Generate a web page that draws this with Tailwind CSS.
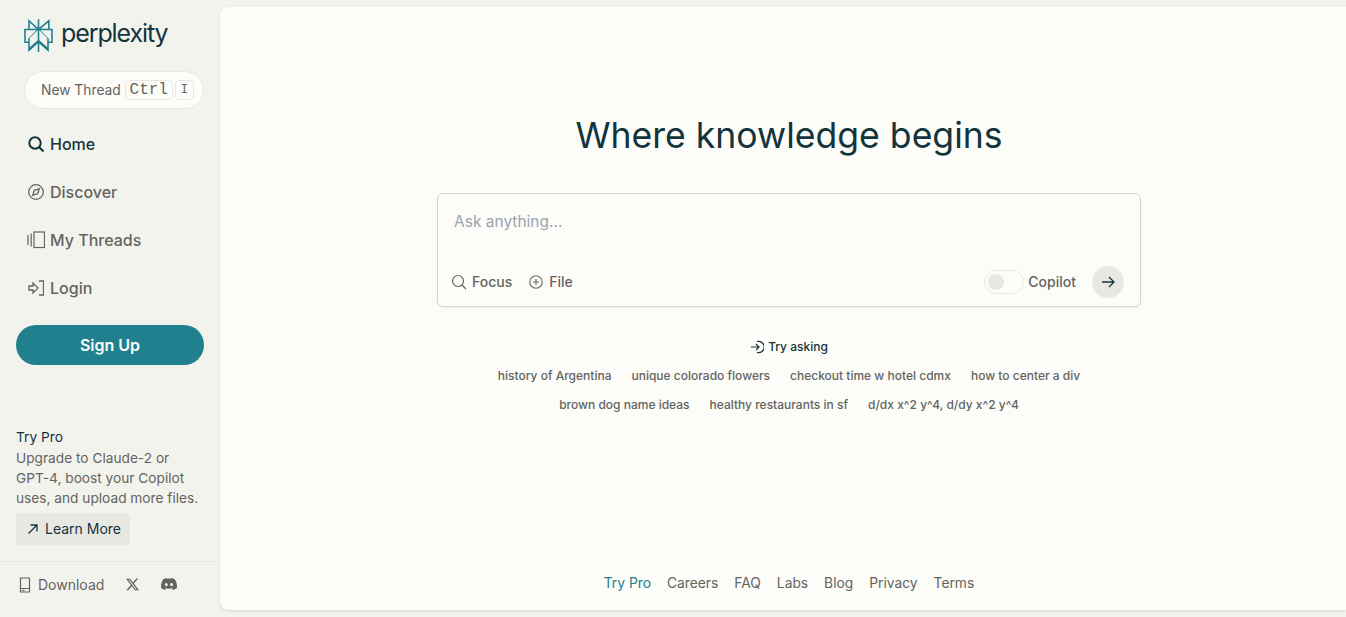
<!DOCTYPE html>
<html lang="en">
  <head>
    <meta charset="UTF-8" />
    <title>Perplexity</title>
    <script src="https://cdn.jsdelivr.net/npm/@tailwindcss/browser@4"></script>
  </head>
  <body class="h-[617px] overflow-hidden bg-[#f3f3ee] font-['Inter',sans-serif] text-[#64645f]">
    <div class="flex h-[617px]">
      <!-- sidebar -->
      <aside class="flex w-[220px] shrink-0 flex-col">
        <div class="flex h-[71px] items-start pl-[22px] pt-[19px]">
          <svg class="h-[33px] w-[33px] text-[#20808d]" viewBox="0 0 24 24" fill="currentColor"><path d="M22.3977 7.0896h-2.3106V.0676l-7.5094 6.3542V.1577h-1.1554v6.1966L4.4904 0v7.0896H1.6023v10.3976h2.8882V24l6.932-6.1002v6.0227h1.1554v-6.0227L19.5 24v-6.5127h2.8977V7.0896zm-3.4657-4.531v4.531h-5.355l5.355-4.531zm-13.2862.0676l4.8691 4.4634H5.6458V2.6262zM2.7576 16.332V8.245h7.8476l-6.1149 6.1147v1.9723H2.7576zm2.8882-2.4516l5.7763-5.7764v7.3948l-5.7763 5.0825v-6.701zm6.9317 1.6124V8.1044l5.7763 5.7764v6.7065l-5.7763-5.0849zm6.9318.8392v-1.9723l-6.115-6.1147h7.8476v8.087h-1.7326z"/></svg>
          <span class="ml-[6px] mt-[-2px] text-[25px] leading-[33px] tracking-[-1.1px] text-[#13343b]">perplexity</span>
        </div>
        <div class="ml-[24px] flex h-[38px] w-[180px] items-center rounded-full border border-[#e8e8e3] bg-[#fcfcf9] pl-[16px]">
          <span class="text-[13.8px]">New Thread</span>
          <kbd class="ml-[4px] flex h-[20px] w-[48px] items-center justify-center rounded border border-[#e8e8e3] font-['Liberation_Mono',monospace] text-base">Ctrl</kbd>
          <kbd class="ml-[2px] flex h-[20px] w-[19px] items-center justify-center rounded border border-[#e8e8e3] font-['Liberation_Mono',monospace] text-xs">I</kbd>
        </div>
        <nav class="mt-[11px] flex flex-col pl-[26px] text-[16px] font-[450]">
          <a class="flex h-[48px] items-center gap-[6px] text-[#13343b]">
            <svg class="h-[18px] w-[18px]" viewBox="0 0 18 18" fill="none" stroke="currentColor" stroke-width="2"><circle cx="9" cy="8" r="5.7"/><path d="M13.2 12.2l4.3 4.3"/></svg>
            Home
          </a>
          <a class="flex h-[48px] items-center gap-[6px]">
            <svg class="h-[18px] w-[18px]" viewBox="0 0 18 18" fill="none" stroke="currentColor" stroke-width="1.3"><circle cx="10" cy="9" r="7.3"/><path d="M13.3 5.7l-1.600 5-5 1.600 1.600-5z"/></svg>
            Discover
          </a>
          <a class="flex h-[48px] items-center gap-[5px]">
            <svg class="h-[18px] w-[19px]" viewBox="0 0 19 18" fill="none" stroke="currentColor" stroke-width="1.2"><path d="M2 4v10M5.200 2.500v13"/><rect x="8" y="1" width="10.500" height="15.500"/></svg>
            My Threads
          </a>
          <a class="flex h-[48px] items-center gap-[6px]">
            <svg class="h-[18px] w-[18px]" viewBox="0 0 18 18" fill="none" stroke="currentColor" stroke-width="1.3"><path d="M13 2h4.500v14H13M3 7h4V4l5 5-5 5v-3H3z"/></svg>
            Login
          </a>
        </nav>
        <button class="ml-[16px] mt-[13px] h-[40px] w-[188px] rounded-full bg-[#20808d] text-[16px] font-semibold text-[#fcfcf9]">Sign Up</button>
        <div class="mt-auto pl-[16px] text-[13.7px] leading-[20px]">
          <div class="mb-[1px] text-[#13343b]">Try Pro</div>
          <p>Upgrade to Claude-2 or<br />GPT-4, boost your Copilot<br />uses, and upload more files.</p>
          <div class="mt-[5px] flex h-[32px] w-[114px] items-center gap-[6px] rounded bg-[#e8e8e3] pl-[11px] text-sm text-[#13343b]">
            <svg class="h-[12px] w-[12px]" viewBox="0 0 12 12" fill="none" stroke="currentColor" stroke-width="1.3"><path d="M1.500 10.500L10 2M3.500 2H10v6.500"/></svg>
            Learn More
          </div>
        </div>
        <div class="mt-[16px] flex h-[56px] items-start border-t border-[#e8e8e3] pl-[19px] pt-[13px] text-sm">
          <svg class="mt-[2px] h-[16px] w-[12px]" viewBox="0 0 12 16" fill="none" stroke="currentColor" stroke-width="1.2"><path d="M1.500 1h9v14h-9zM1.500 11.500h9M3.500 13.300h2"/></svg>
          <span class="ml-[7px] leading-[20px]">Download</span>
          <svg class="ml-[22px] mt-[3px] h-[13px] w-[13px]" viewBox="0 0 24 24" fill="currentColor"><path d="M18.901 1.153h3.68l-8.04 9.19L24 22.846h-7.406l-5.8-7.584-6.638 7.584H.474l8.6-9.83L0 1.154h7.594l5.243 6.932ZM17.61 20.644h2.039L6.486 3.24H4.298Z"/></svg>
          <svg class="ml-[22px] mt-[1px] h-[16px] w-[16px]" viewBox="0 0 24 24" fill="currentColor"><path d="M20.317 4.3698a19.7913 19.7913 0 00-4.8851-1.5152.0741.0741 0 00-.0785.0371c-.211.3753-.4447.8648-.6083 1.2495-1.8447-.2762-3.68-.2762-5.4868 0-.1636-.3933-.4058-.8742-.6177-1.2495a.077.077 0 00-.0785-.037 19.7363 19.7363 0 00-4.8852 1.515.0699.0699 0 00-.0321.0277C.5334 9.0458-.319 13.5799.0992 18.0578a.0824.0824 0 00.0312.0561c2.0528 1.5076 4.0413 2.4228 5.9929 3.0294a.0777.0777 0 00.0842-.0276c.4616-.6304.8731-1.2952 1.226-1.9942a.076.076 0 00-.0416-.1057c-.6528-.2476-1.2743-.5495-1.8722-.8923a.077.077 0 01-.0076-.1277c.1258-.0943.2517-.1923.3718-.2914a.0743.0743 0 01.0776-.0105c3.9278 1.7933 8.18 1.7933 12.0614 0a.0739.0739 0 01.0785.0095c.1202.099.246.1981.3728.2924a.077.077 0 01-.0066.1276 12.2986 12.2986 0 01-1.873.8914.0766.0766 0 00-.0407.1067c.3604.698.7719 1.3628 1.225 1.9932a.076.076 0 00.0842.0286c1.961-.6067 3.9495-1.5219 6.0023-3.0294a.077.077 0 00.0313-.0552c.5004-5.177-.8382-9.6739-3.5485-13.6604a.061.061 0 00-.0312-.0286zM8.02 15.3312c-1.1825 0-2.1569-1.0857-2.1569-2.419 0-1.3332.9555-2.4189 2.157-2.4189 1.2108 0 2.1757 1.0952 2.1568 2.419 0 1.3332-.9555 2.4189-2.1569 2.4189zm7.9748 0c-1.1825 0-2.1569-1.0857-2.1569-2.419 0-1.3332.9554-2.4189 2.1569-2.4189 1.2108 0 2.1757 1.0952 2.1568 2.419 0 1.3332-.946 2.4189-2.1568 2.4189z"/></svg>
        </div>
      </aside>

      <!-- main panel -->
      <main class="my-[7px] flex flex-1 flex-col items-center rounded-l-lg bg-[#fcfcf9] pl-[12px] shadow-sm">
        <h1 class="mt-[105px] text-[35.6px] leading-[48px] text-[#13343b]">Where knowledge begins</h1>
        <div class="mt-[33px] h-[114px] w-[704px] rounded-md border border-[#d5d5d0] shadow-xs">
          <div class="pl-[16px] pt-[16px] text-[15.5px] leading-[24px] text-[#9ca3af]">Ask anything...</div>
          <div class="mt-[28px] flex h-[40px] items-center pl-[13px] pr-[16px] text-sm font-[450]">
            <svg class="h-[16px] w-[16px]" viewBox="0 0 16 16" fill="none" stroke="currentColor" stroke-width="1.200"><circle cx="7" cy="7" r="5.500"/><path d="M11 11l4 4"/></svg>
            <span class="ml-[5px]">Focus</span>
            <svg class="ml-[17px] h-[14px] w-[14px]" viewBox="0 0 14 14" fill="none" stroke="currentColor" stroke-width="1.100"><circle cx="7" cy="7" r="6.300"/><path d="M7 4v6M4 7h6"/></svg>
            <span class="ml-[6px]">File</span>
            <div class="ml-auto flex h-[24px] w-[40px] items-center rounded-full border border-[#e8e8e3] pl-[3px]">
              <div class="h-[16px] w-[16px] rounded-full bg-[#e8e8e3]"></div>
            </div>
            <span class="ml-[4px]">Copilot</span>
            <div class="ml-[16px] flex h-[32px] w-[32px] items-center justify-center rounded-full bg-[#e8e8e3] text-[#13343b]">
              <svg class="h-[14px] w-[14px]" viewBox="0 0 14 14" fill="none" stroke="currentColor" stroke-width="1.300"><path d="M1 7h12M8 2l5 5-5 5"/></svg>
            </div>
          </div>
        </div>
        <div class="mt-[32px] flex h-[16px] items-center gap-[4px] text-xs font-[450] text-[#13343b]">
          <svg class="h-[14px] w-[14px]" viewBox="0 0 14 14" fill="none" stroke="currentColor" stroke-width="1.200"><path d="M1 7h8M6 4l3 3-3 3M7 1.500a5.700 5.700 0 1 1 0 11"/></svg>
          Try asking
        </div>
        <div class="mt-[6px] flex h-[29px] items-center gap-[20px] text-xs font-[450]">
          <span>history of Argentina</span><span>unique colorado flowers</span><span>checkout time w hotel cdmx</span><span>how to center a div</span>
        </div>
        <div class="flex h-[29px] items-center gap-[20px] text-xs font-[450]">
          <span>brown dog name ideas</span><span>healthy restaurants in sf</span><span>d/dx x^2 y^4, d/dy x^2 y^4</span>
        </div>
        <div class="mt-auto mb-[17px] flex gap-[16px] text-[13.8px] leading-[20px]">
          <a class="text-[#20808d]">Try Pro</a><a>Careers</a><a>FAQ</a><a>Labs</a><a>Blog</a><a>Privacy</a><a>Terms</a>
        </div>
      </main>
    </div>
  </body>
</html>
